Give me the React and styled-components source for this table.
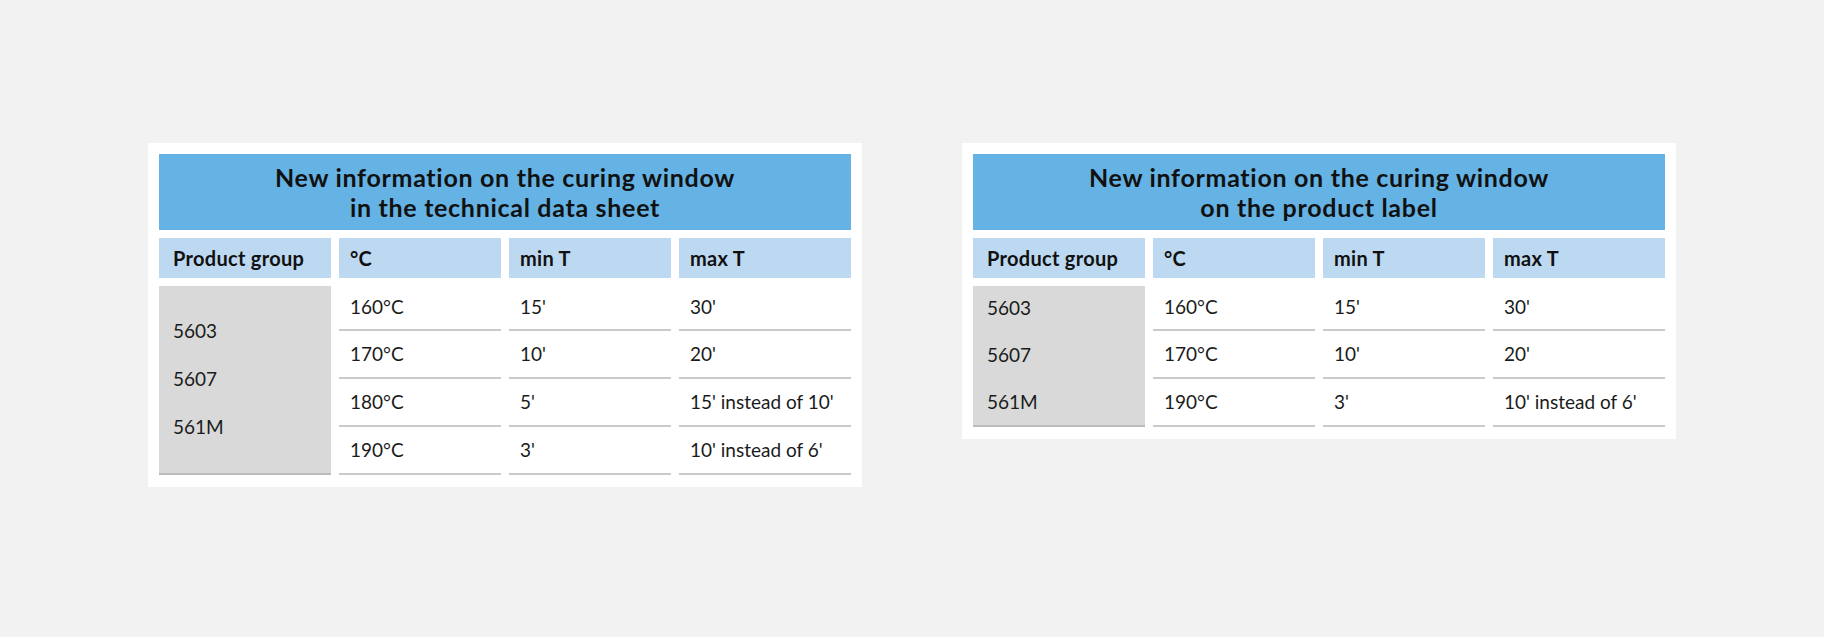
import React from 'react'
import styled, { createGlobalStyle } from 'styled-components'

const GlobalStyle = createGlobalStyle`
    html, body {
        margin: 0;
        padding: 0;
        background: #f2f2f2;
    }
    * {
        box-sizing: border-box;
    }
`

const tables = [
    {
        title: ['New information on the curing window', 'in the technical data sheet'],
        groups: ['5603', '5607', '561M'],
        merged: true,
        rows: [
            ['160°C', "15'", "30'"],
            ['170°C', "10'", "20'"],
            ['180°C', "5'", "15' instead of 10'"],
            ['190°C', "3'", "10' instead of 6'"],
        ],
    },
    {
        title: ['New information on the curing window', 'on the product label'],
        groups: ['5603', '5607', '561M'],
        merged: false,
        rows: [
            ['160°C', "15'", "30'"],
            ['170°C', "10'", "20'"],
            ['190°C', "3'", "10' instead of 6'"],
        ],
    },
]

const heads = ['Product group', '°C', 'min T', 'max T']

function CuringTable({ data }) {
    const rowHeights = data.rows.map((_, i) => (i === 0 ? '45px' : '48px')).join(' ')

    return (
        <Card>
            <Title>
                {data.title.map((line) => (
                    <span key={line}>{line}</span>
                ))}
            </Title>

            <HeadRow>
                {heads.map((h, i) => (
                    <HeadCell key={h} $first={i === 0}>{h}</HeadCell>
                ))}
            </HeadRow>

            <Body $rows={rowHeights}>
                {data.merged && (
                    <GroupCell $span={data.rows.length} $last>
                        {data.groups.map((g) => (
                            <GroupLabel key={g}>{g}</GroupLabel>
                        ))}
                    </GroupCell>
                )}

                {data.rows.map((row, r) => (
                    <React.Fragment key={r}>
                        {!data.merged && (
                            <GroupCell $last={r === data.rows.length - 1}>
                                {data.groups[r]}
                            </GroupCell>
                        )}
                        {row.map((val, c) => (
                            <Cell key={c}>{val}</Cell>
                        ))}
                    </React.Fragment>
                ))}
            </Body>
        </Card>
    )
}

function App() {
    return (
        <Page>
            <GlobalStyle />
            {tables.map((t, i) => (
                <CuringTable key={i} data={t} />
            ))}
        </Page>
    )
}

const Page = styled.main`
    min-height: 637px;
    display: flex;
    justify-content: center;
    align-items: flex-start;
    gap: 100px;
    padding-top: 143px;
    font-family: Lato, "Liberation Sans", sans-serif;
    color: #1b1b1b;
`

const Card = styled.section`
    width: 714px;
    background: #ffffff;
    padding: 11px 11px 12px;
`

const Title = styled.h2`
    margin: 0;
    height: 76px;
    background: #65b3e4;
    display: flex;
    flex-direction: column;
    align-items: center;
    justify-content: center;
    font-size: 25px;
    line-height: 30px;
    letter-spacing: 0.7px;
    font-weight: 700;
    color: #111;
`

const cols = `
    display: grid;
    grid-template-columns: 172px 162px 162px 172px;
    column-gap: 8px;
`

const HeadRow = styled.div`
    ${cols}
    margin-top: 8px;
    height: 40px;
`

const HeadCell = styled.div`
    background: #bdd9f2;
    display: flex;
    align-items: center;
    padding-left: ${(p) => (p.$first ? '14px' : '11px')};
    padding-bottom: 1px;
    font-size: 20px;
    letter-spacing: 0.3px;
    font-weight: 700;
    color: #111;
`

const Body = styled.div`
    ${cols}
    margin-top: 8px;
    grid-template-rows: ${(p) => p.$rows};
`

const GroupCell = styled.div`
    grid-column: 1;
    grid-row: ${(p) => (p.$span ? `1 / span ${p.$span}` : 'auto')};
    background: #d9d9d9;
    display: flex;
    flex-direction: column;
    justify-content: center;
    padding-left: 14px;
    padding-bottom: 2px;
    font-size: 19px;
    border-bottom: ${(p) => (p.$last ? '2px solid #bcbcbc' : 'none')};
`

const GroupLabel = styled.div`
    line-height: 48px;
`

const Cell = styled.div`
    display: flex;
    align-items: center;
    padding-left: 11px;
    padding-bottom: 2px;
    font-size: 19px;
    border-bottom: 2px solid #cacaca;
`

export default App
